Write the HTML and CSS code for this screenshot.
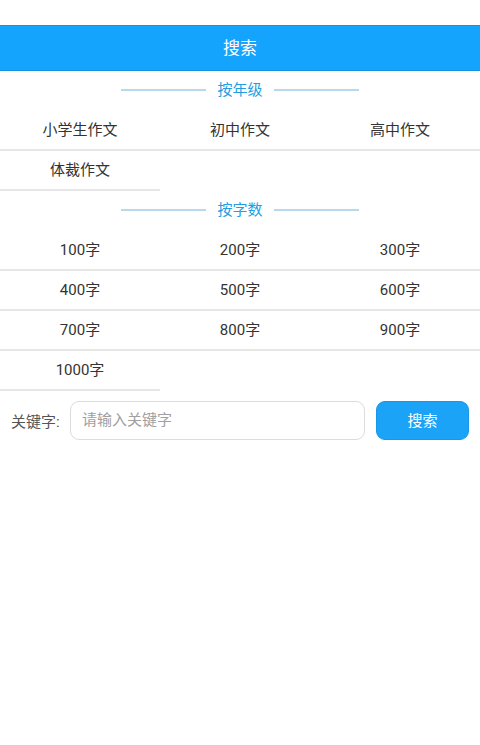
FILE: index.html
```html
<!DOCTYPE html>
<html lang="zh-CN">
<head>
<meta charset="utf-8">
<title>搜索</title>
<link rel="stylesheet" href="styles.css">
</head>
<body>
<div class="status"></div>
<header class="topbar">搜索</header>
<section>
  <div class="sec-title"><span class="line"></span><span class="label">按年级</span><span class="line"></span></div>
  <div class="grid">
    <div class="cell">小学生作文</div>
    <div class="cell">初中作文</div>
    <div class="cell">高中作文</div>
    <div class="cell">体裁作文</div>
  </div>
</section>
<section>
  <div class="sec-title"><span class="line"></span><span class="label">按字数</span><span class="line"></span></div>
  <div class="grid">
    <div class="cell">100字</div>
    <div class="cell">200字</div>
    <div class="cell">300字</div>
    <div class="cell">400字</div>
    <div class="cell">500字</div>
    <div class="cell">600字</div>
    <div class="cell">700字</div>
    <div class="cell">800字</div>
    <div class="cell">900字</div>
    <div class="cell">1000字</div>
  </div>
</section>
<div class="search-row">
  <span class="kw">关键字:</span>
  <div class="input">请输入关键字</div>
  <div class="btn">搜索</div>
</div>
</body>
</html>
```
FILE: styles.css
```css
html, body {
  margin: 0;
  padding: 0;
  background: #fff;
  font-family: Roboto, "Noto Sans CJK SC", sans-serif;
  color: #333;
}
.status {
  height: 25px;
}
.topbar {
  height: 44px;
  line-height: 44px;
  background: #14a3fd;
  border-top: 1px solid #1693e0;
  border-bottom: 1px solid #1693e0;
  color: #fff;
  text-align: center;
  font-size: 17px;
}
.sec-title {
  height: 40px;
  display: flex;
  align-items: center;
  justify-content: center;
  gap: 11px;
}
.sec-title .line {
  width: 85px;
  height: 2px;
  background: #b8d8ee;
  margin-top: -2px;
}
.sec-title .label {
  color: #239ee2;
  font-size: 15px;
  line-height: 20px;
  white-space: nowrap;
  margin-top: -2px;
}
.grid {
  display: grid;
  grid-template-columns: repeat(3, 1fr);
}
.cell {
  height: 38px;
  line-height: 38px;
  text-align: center;
  font-size: 15px;
  border-bottom: 2px solid #e6e6e6;
  color: #333;
}
.search-row {
  display: flex;
  align-items: center;
  padding: 10px 11px 0 11px;
}
.kw {
  font-size: 15px;
  color: #555;
  width: 59px;
  white-space: nowrap;
}
.input {
  flex: 1;
  height: 37px;
  line-height: 37px;
  border: 1px solid #dcdcdc;
  border-radius: 9px;
  padding-left: 11px;
  font-size: 15px;
  color: #a0a0a0;
}
.btn {
  margin-left: 11px;
  width: 93px;
  height: 39px;
  line-height: 39px;
  border-radius: 9px;
  background: #1ba3f8;
  border: 1px solid #1897e6;
  box-sizing: border-box;
  color: #fff;
  text-align: center;
  font-size: 15px;
}
```
